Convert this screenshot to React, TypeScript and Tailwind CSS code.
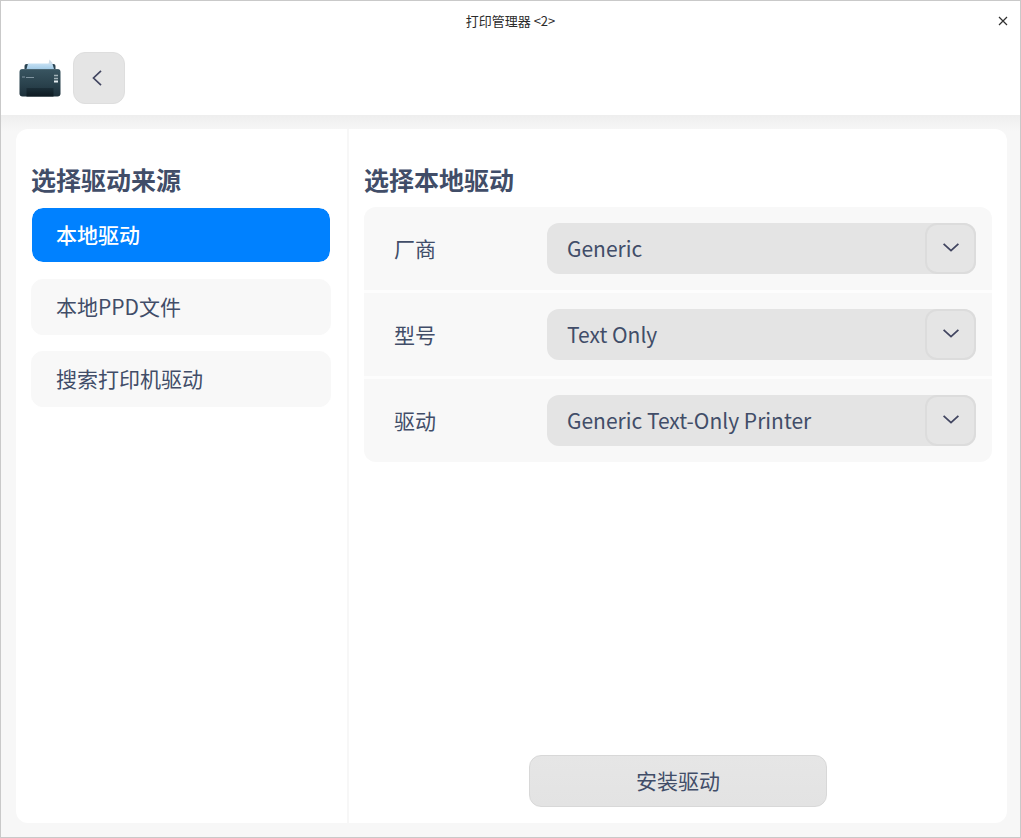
import { useState } from "react";

const sources = ["本地驱动", "本地PPD文件", "搜索打印机驱动"];

const fields = [
  { id: "vendor", label: "厂商", options: ["Generic"] },
  { id: "model", label: "型号", options: ["Text Only"] },
  { id: "driver", label: "驱动", options: ["Generic Text-Only Printer"] },
];

function PrinterIcon() {
  return (
    <svg viewBox="0 0 42 38" className="h-[38px] w-[42px]" aria-hidden="true">
      <defs>
        <linearGradient id="paper" x1="0" y1="0" x2="0" y2="1">
          <stop offset="0" stopColor="#cfe6f7" />
          <stop offset="1" stopColor="#a3cbe6" />
        </linearGradient>
        <linearGradient id="body" x1="0" y1="0" x2="0" y2="1">
          <stop offset="0" stopColor="#395561" />
          <stop offset="0.55" stopColor="#2a424d" />
          <stop offset="1" stopColor="#1d303a" />
        </linearGradient>
        <linearGradient id="tray" x1="0" y1="0" x2="0" y2="1">
          <stop offset="0" stopColor="#1b2e38" />
          <stop offset="1" stopColor="#0d1a21" />
        </linearGradient>
      </defs>
      <path d="M5.500 11V7q0-2 2-2h27q2 0 2 2v4z" fill="#2c4552" />
      <path d="M7.500 10L9 4.500h20.500L32 3l1.500 2 1.500 5z" fill="url(#paper)" />
      <path d="M30.500 0.500L34 4.500l-4.500 0.500z" fill="#cfdde8" />
      <rect x="0.500" y="10" width="41" height="27.500" rx="3" fill="url(#body)" />
      <path d="M3 10.500h36" stroke="#4a6470" strokeWidth="1" />
      <path d="M3 18h3M7 18.500h8" stroke="#8094a0" strokeWidth="1.200" />
      <path d="M7.500 29h27v8.500h-27z" fill="url(#tray)" />
      <path d="M35 16.500h4M35 19.500h4" stroke="#a3b2b9" strokeWidth="1.400" />
      <path d="M35 22.500h4" stroke="#e6edf0" strokeWidth="2" />
    </svg>
  );
}

export default function App() {
  const [active, setActive] = useState(0);

  return (
    <div className="flex min-h-screen flex-col border border-[#c9c9c9] bg-white font-['Noto_Sans_CJK_SC',sans-serif] text-[#414d68]">
      <header>
        <div className="grid h-10 grid-cols-[1fr_auto_1fr] items-center">
          <h1 className="col-start-2 text-[13px] leading-5 text-[#2b2b2b]">打印管理器 &lt;2&gt;</h1>
          <button type="button" aria-label="关闭" className="mr-2 justify-self-end p-1 text-[#303030]">
            <svg viewBox="0 0 10 10" className="size-[10px]" fill="none" stroke="currentColor" strokeWidth="1.200">
              <path d="M1 1l8 8M9 1L1 9" />
            </svg>
          </button>
        </div>
        <div className="flex h-[74px] items-center gap-3 px-[18px]">
          <PrinterIcon />
          <button
            type="button"
            aria-label="返回"
            className="flex size-[52px] items-center justify-center rounded-xl border border-[#dedede] bg-[#e5e5e5]"
          >
            <svg viewBox="0 0 10 16" className="mr-1 h-4 w-[10px]" fill="none" stroke="#414560" strokeWidth="1.700">
              <path d="M9 0.800L1.500 8 9 15.200" />
            </svg>
          </button>
        </div>
      </header>

      <main className="flex grow bg-[#f7f7f7] bg-[linear-gradient(#eeeeee,#f7f7f7_16px)] pt-[14px] pr-[13px] pb-[14px] pl-[15px]">
        <div className="flex grow rounded-xl bg-white">
          <aside className="w-[333px] shrink-0 border-r-2 border-[#f7f7f7] pt-8 pr-4 pl-[15px]">
            <h2 className="text-[25px] leading-9 font-bold">选择驱动来源</h2>
            <div className="mt-[10px] flex flex-col gap-4">
              {sources.map((name, i) => (
                <button
                  key={name}
                  type="button"
                  aria-pressed={i === active}
                  onClick={() => setActive(i)}
                  className={
                    i === active
                      ? "h-14 rounded-xl border border-white bg-[#0081ff] bg-clip-padding px-6 text-left text-[21px] font-medium text-white"
                      : "h-14 rounded-xl border border-[#f8f8f8] bg-[#f8f8f8] px-6 text-left text-[21px]"
                  }
                >
                  {name}
                </button>
              ))}
            </div>
          </aside>

          <section className="flex grow flex-col px-[15px] pt-8 pb-4">
            <h2 className="text-[25px] leading-9 font-bold">选择本地驱动</h2>
            <div className="mt-[10px] flex flex-col gap-[3px] overflow-hidden rounded-xl bg-[#fdfdfd]">
              {fields.map((field) => (
                <div key={field.id} className="flex items-center bg-[#f8f8f8] py-4 pr-4 pl-[30px]">
                  <label htmlFor={field.id} className="w-[153px] shrink-0 text-[21px]">
                    {field.label}
                  </label>
                  <div className="relative grow">
                    <select
                      id={field.id}
                      className="block h-[51px] w-full appearance-none rounded-xl bg-[#e4e4e4] pr-14 pl-5 text-[21px]"
                    >
                      {field.options.map((option) => (
                        <option key={option}>{option}</option>
                      ))}
                    </select>
                    <span className="pointer-events-none absolute inset-y-0 right-0 flex w-[51px] items-center justify-center rounded-xl border-2 border-[#dcdcdc] bg-[#e5e5e5]">
                      <svg viewBox="0 0 16 9" className="mb-0.5 h-[9px] w-4" fill="none" stroke="#414560" strokeWidth="1.800">
                        <path d="M0.600 0.800L8 7.600 15.400 0.800" />
                      </svg>
                    </span>
                  </div>
                </div>
              ))}
            </div>
            <button
              type="button"
              className="mt-auto h-[52px] w-[298px] self-center rounded-xl border border-[#d8d8d8] bg-linear-to-b from-[#e6e6e6] to-[#e3e3e3] text-[21px]"
            >
              安装驱动
            </button>
          </section>
        </div>
      </main>
    </div>
  );
}
